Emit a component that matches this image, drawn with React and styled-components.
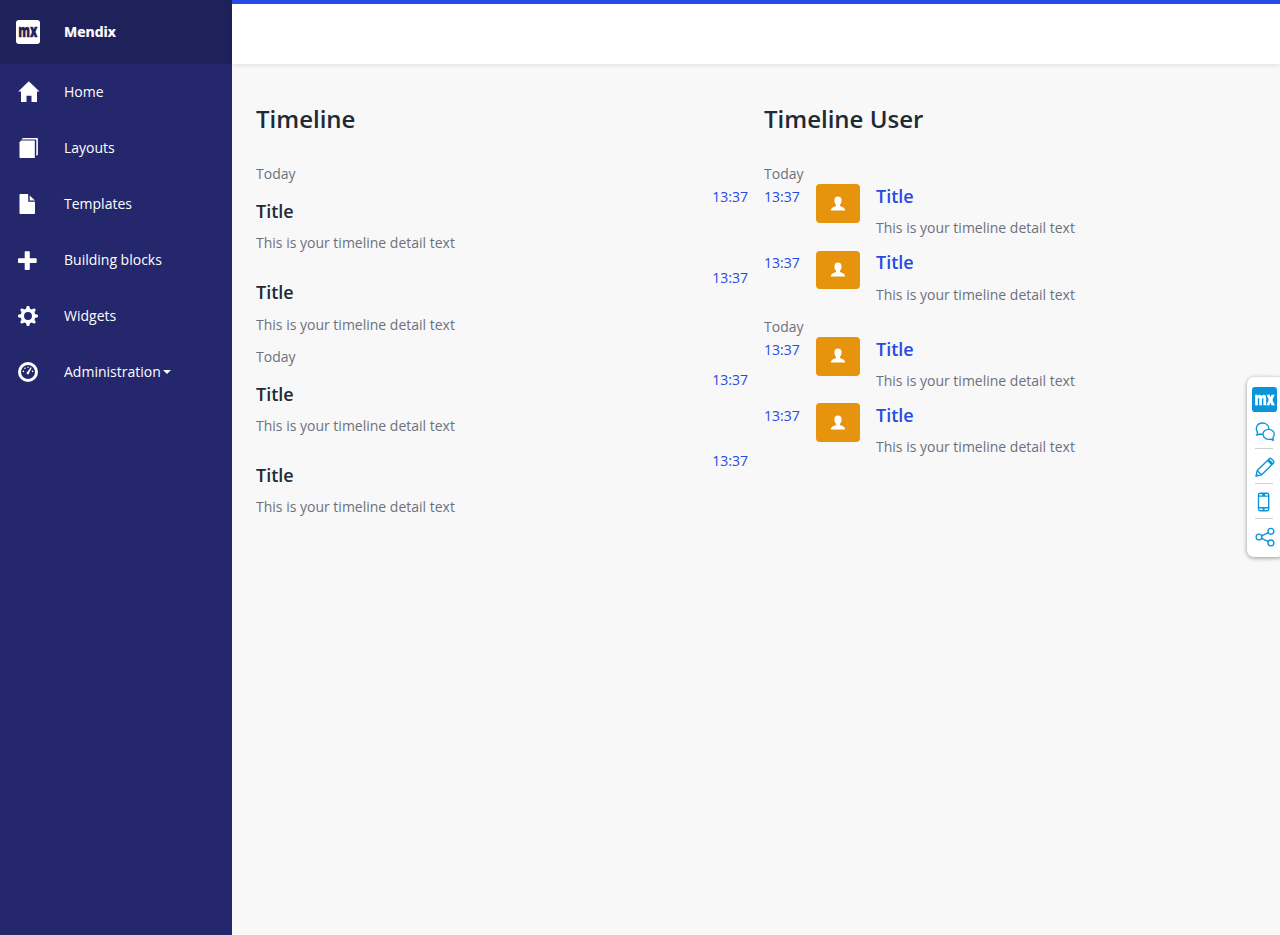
import React from 'react';
import styled, { createGlobalStyle } from 'styled-components';

const Global = createGlobalStyle`
  * { box-sizing: border-box; }
  body {
    margin: 0;
    background: #f8f8f8;
    color: #6c717e;
    font: 14px/20px "Open Sans", "Noto Sans", sans-serif;
    overflow: hidden;
  }
`;

const Page = styled.div`
  display: flex;
  height: 100vh;
`;

const Sidebar = styled.aside`
  width: 232px;
  flex: none;
  background: #24276c;
  color: #fff;
`;

const Brand = styled.div`
  height: 64px;
  display: flex;
  align-items: center;
  gap: 24px;
  padding-left: 16px;
  background: #1f215b;
  font-weight: 700;
  -webkit-text-stroke: 0.2px;
`;

const Nav = styled.nav`
  display: flex;
  flex-direction: column;
`;

const NavItem = styled.a`
  height: 56px;
  display: flex;
  align-items: center;
  gap: 24px;
  padding-left: 16px;
  color: #fff;
`;

const NavIcon = styled.svg`
  width: 24px;
  height: 24px;
  flex: none;
  fill: #fff;
  overflow: visible;
`;

const NavLabel = styled.span`
  display: flex;
  align-items: center;
`;

const Caret = styled.span`
  margin-left: 2px;
  border-top: 4px solid #fff;
  border-left: 4px solid transparent;
  border-right: 4px solid transparent;
`;

const Main = styled.main`
  flex: 1;
  min-width: 0;
`;

const Topbar = styled.header`
  height: 64px;
  background: #fff;
  border-top: 4px solid #264ae5;
  box-shadow: 0 2px 4px rgba(0, 0, 0, 0.08);
`;

const Columns = styled.div`
  display: grid;
  grid-template-columns: 492px 492px;
  column-gap: 16px;
  padding: 36px 24px 0;
`;

const Heading = styled.h2`
  margin: 0 0 28.35px;
  padding-top: 2px;
  color: #202a36;
  font-size: 24px;
  line-height: 34px;
  font-weight: 600;
`;

const Day = styled.div`
  height: 20px;
`;

const Event = styled.div`
  display: flex;
  justify-content: space-between;
  height: 81.45px;
`;

const EventBody = styled.div`
  padding-top: 14.5px;
`;

const Title = styled.h4`
  margin: 0 0 8.6px;
  color: ${(p) => (p.$link ? '#264ae5' : '#202a36')};
  font-size: 18px;
  line-height: 25.7px;
  font-weight: 600;
`;

const Detail = styled.p`
  margin: 0;
  line-height: 20px;
`;

const Time = styled.span`
  padding-top: 2.6px;
  color: #264ae5;
`;

const UserEvent = styled.div`
  display: grid;
  grid-template-columns: 36px 44px 1fr;
  column-gap: 16px;
  align-items: start;
  height: 66.3px;
`;

const UserEventBody = styled.div`
  margin-top: -0.2px;
`;

const Avatar = styled.div`
  height: 38.6px;
  display: flex;
  justify-content: center;
  align-items: center;
  border-radius: 4px;
  background: #e6930e;
`;

const Dock = styled.aside`
  position: fixed;
  top: 377px;
  right: -4px;
  width: 37px;
  height: 180px;
  padding: 10px 0 0 5px;
  border-radius: 7px;
  background: #fff;
  box-shadow: 0 1px 4px rgba(0, 0, 0, 0.4);
`;

const DockLogo = styled.svg`
  display: block;
  width: 25px;
  height: 25px;
  overflow: visible;
`;

const DockTool = styled.div`
  width: 18px;
  height: ${(p) => p.$height}px;
  margin-left: 3px;
  padding-top: ${(p) => p.$top}px;
  border-bottom: ${(p) => (p.$last ? '0' : '1px solid #cfcfcf')};
`;

const DockIcon = styled.svg`
  display: block;
  width: 20px;
  height: 20px;
  fill: none;
  stroke: #0a95da;
  stroke-width: 1.35;
  stroke-linejoin: round;
  stroke-linecap: round;
`;

const LogoText = styled.text`
  font-family: "Open Sans", sans-serif;
  font-weight: 800;
  stroke-width: 0.4;
`;

const MxLogo = ({ box, ink }) => (
  <>
    <rect width="24" height="24" rx="3" fill={box} />
    <LogoText transform="translate(2.3 16.8) scale(0.7 1)" fontSize="17" textLength="27.4" lengthAdjust="spacingAndGlyphs" fill={ink} stroke={ink}>
      mx
    </LogoText>
  </>
);

const gearTeeth = [0, 45, 90, 135, 180, 225, 270, 315];

const navItems = [
  {
    label: 'Home',
    icon: <path d="M12.8 1.3 23.5 11.6H21V22H15.5V15.7H10.5V22H5V11.6H2.3Z" />,
  },
  {
    label: 'Layouts',
    icon: (
      <>
        <path d="M5.2 4.6H18.8V22H4.2Q3.5 22 3.5 21.3V6.3Z" />
        <path d="M5.4 3.4 6.9 2H21.1Q21.9 2 21.9 2.8V18.8L20.3 20V4.3Q20.3 3.4 19.4 3.4Z" />
      </>
    ),
  },
  {
    label: 'Templates',
    icon: (
      <>
        <path d="M4.2 2H12.2V9.8H19V21.3Q19 22 18.3 22H4.2Q3.5 22 3.5 21.3V2.7Q3.5 2 4.2 2Z" />
        <path d="M13.7 3.4 19 8.4H13.7Z" />
      </>
    ),
  },
  {
    label: 'Building blocks',
    icon: <path d="M9.2 3.3H13Q13.8 3.3 13.8 4.1V10.2H19.9Q20.7 10.2 20.7 11V14.2Q20.7 15 19.9 15H13.8V21.2Q13.8 22 13 22H9.2Q8.7 22 8.7 21.2V15H2.8Q2 15 2 14.2V11Q2 10.2 2.8 10.2H8.7V4.1Q8.7 3.3 9.2 3.3Z" />,
  },
  {
    label: 'Widgets',
    icon: (
      <>
        <circle cx="12" cy="12" r="5.7" fill="none" stroke="#fff" strokeWidth="3.5" />
        {gearTeeth.map((a) => (
          <path key={a} d="M9.9 5.6 10.8 2.1H13.2L14.1 5.6Z" transform={`rotate(${a} 12 12)`} />
        ))}
      </>
    ),
  },
  {
    label: 'Administration',
    caret: true,
    icon: (
      <>
        <circle cx="12" cy="12" r="8.5" fill="none" stroke="#fff" strokeWidth="3" />
        <circle cx="7.4" cy="11.4" r=".8" />
        <circle cx="8.9" cy="8.3" r=".8" />
        <circle cx="12" cy="7.2" r=".7" />
        <circle cx="16.6" cy="11.4" r=".8" />
        <path d="M14.8 7.3 15.7 7.8 13.2 12.7A1.3 1.3 0 1 1 11.5 11.8Z" />
      </>
    ),
  },
];

const UserGlyph = () => (
  <svg width="16" height="16" viewBox="0 0 16 16" fill="#fff">
    <path d="M8 .6C10.4.6 11.6 2.2 11.6 4.5 11.6 6.4 10.8 7.8 10 8.6V10C11.2 10.8 14.9 11.1 15.2 14.5H.8C1.1 11.1 4.8 10.8 6 10V8.6C5.2 7.8 4.4 6.4 4.4 4.5 4.4 2.2 5.6.6 8 .6Z" />
  </svg>
);

const groups = [
  { day: 'Today', times: ['13:37', '13:37'] },
  { day: 'Today', times: ['13:37', '13:37'] },
];

const detail = 'This is your timeline detail text';

export default function App() {
  return (
    <>
      <Global />
      <Page>
        <Sidebar>
          <Brand>
            <NavIcon viewBox="0 0 24 24">
              <MxLogo box="#fff" ink="#1f215b" />
            </NavIcon>
            Mendix
          </Brand>
          <Nav>
            {navItems.map((item) => (
              <NavItem key={item.label}>
                <NavIcon viewBox="0 0 24 24">{item.icon}</NavIcon>
                <NavLabel>
                  {item.label}
                  {item.caret && <Caret />}
                </NavLabel>
              </NavItem>
            ))}
          </Nav>
        </Sidebar>
        <Main>
          <Topbar />
          <Columns>
            <section>
              <Heading>Timeline</Heading>
              {groups.map((group, g) => (
                <div key={g}>
                  <Day>{group.day}</Day>
                  {group.times.map((time, i) => (
                    <Event key={i}>
                      <EventBody>
                        <Title>Title</Title>
                        <Detail>{detail}</Detail>
                      </EventBody>
                      <Time>{time}</Time>
                    </Event>
                  ))}
                </div>
              ))}
            </section>
            <section>
              <Heading>Timeline User</Heading>
              {groups.map((group, g) => (
                <div key={g}>
                  <Day>{group.day}</Day>
                  {group.times.map((time, i) => (
                    <UserEvent key={i}>
                      <Time>{time}</Time>
                      <Avatar>
                        <UserGlyph />
                      </Avatar>
                      <UserEventBody>
                        <Title $link>Title</Title>
                        <Detail>{detail}</Detail>
                      </UserEventBody>
                    </UserEvent>
                  ))}
                </div>
              ))}
            </section>
          </Columns>
        </Main>
      </Page>
      <Dock>
        <DockLogo viewBox="0 0 24 24">
          <MxLogo box="#0a95da" ink="#fff" />
        </DockLogo>
        <DockTool $height={37} $top={10}>
          <DockIcon viewBox="0 0 20 20">
            <path d="M7.3 12.3 5.2 12 1.8 13.2 2.6 10.3C-.2 6.6 2 1 7.3 1 11 1 13.7 3.3 13.8 6.4" />
            <path d="M13.6 7.4C16.8 7.4 19.2 9.6 19.2 12.3 19.2 13.7 18.7 14.9 17.8 15.8L18.5 18.3 15.6 17.1C11.8 18 8 15.7 8 12.3 8 9.6 10.4 7.4 13.6 7.4Z" />
          </DockIcon>
        </DockTool>
        <DockTool $height={35} $top={8}>
          <DockIcon viewBox="0 0 20 20">
            <path d="M1 19.2 2.2 13.6 14.3 1.7Q15.2.8 16.2 1.7L18.6 4.1Q19.4 5 18.6 5.9L6.5 17.9ZM2.2 13.6 6.5 17.9M12.6 3.4 16.9 7.7M13.8 2.8 17.8 6.8M1.4 17.2 3 18.8" />
          </DockIcon>
        </DockTool>
        <DockTool $height={35} $top={8}>
          <DockIcon viewBox="0 0 20 20">
            <rect x="3.5" y="1.2" width="10.2" height="17.5" rx="1.6" />
            <path d="M3.5 4.1H13.7M3.5 15.7H13.7M7.6 2.7H9.6M8.1 17.2H9.1" />
          </DockIcon>
        </DockTool>
        <DockTool $height={36} $top={8} $last>
          <DockIcon viewBox="0 0 20 20">
            <circle cx="4" cy="10" r="2.9" />
            <circle cx="15.9" cy="4.3" r="2.9" />
            <circle cx="15.9" cy="15.9" r="2.9" />
            <path d="M6.7 8.8 13.2 5.6M6.7 11.3 13.2 14.7" />
          </DockIcon>
        </DockTool>
      </Dock>
    </>
  );
}
